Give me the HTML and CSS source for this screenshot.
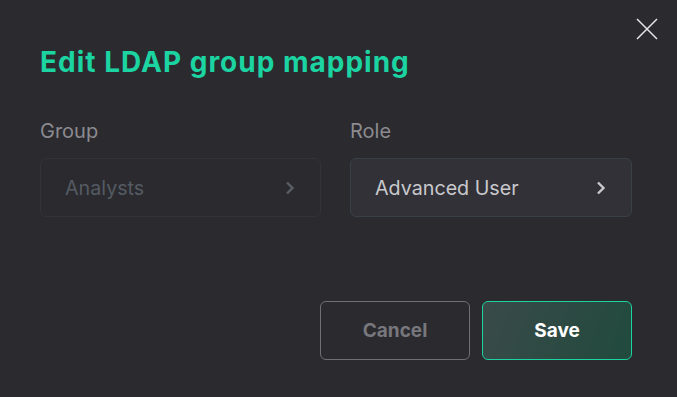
FILE: index.html
```html
<!DOCTYPE html>
<html lang="en">

<head>
    <meta charset="utf-8">
    <meta name="viewport" content="width=device-width, initial-scale=1.0">
    <title>Edit LDAP group mapping</title>
    <link rel="stylesheet" href="styles.css">
</head>

<body>
    <div class="dialog">
        <button class="close" aria-label="Close">
            <svg width="22" height="22" viewBox="0 0 22 22">
                <path d="M1 1 L21 21 M21 1 L1 21" stroke="#e6e6e8" stroke-width="1.5" fill="none" />
            </svg>
        </button>

        <h1>Edit LDAP group mapping</h1>

        <div class="fields">
            <div class="field">
                <label>Group</label>
                <div class="select disabled">
                    <span>Analysts</span>
                    <svg class="chev" width="10" height="14" viewBox="0 0 10 14">
                        <path d="M2 1.5 L7.5 7 L2 12.5" fill="none" stroke-width="2.4" />
                    </svg>
                </div>
            </div>
            <div class="field">
                <label>Role</label>
                <div class="select">
                    <span>Advanced User</span>
                    <svg class="chev" width="10" height="14" viewBox="0 0 10 14">
                        <path d="M2 1.5 L7.5 7 L2 12.5" fill="none" stroke-width="2.4" />
                    </svg>
                </div>
            </div>
        </div>

        <div class="actions">
            <button class="btn cancel">Cancel</button>
            <button class="btn save">Save</button>
        </div>
    </div>
</body></html>
```

FILE: styles.css
```css
* {
    box-sizing: border-box;
    margin: 0;
    padding: 0;
}

html,
body {
    height: 100%;
}

body {
    background-color: #2a2a2f;
    font-family: 'Inter', 'Noto Sans', sans-serif;
}

.dialog {
    position: relative;
    padding: 45px 45px 0 40px;
}

.close {
    position: absolute;
    top: 18px;
    right: 19px;
    background: none;
    border: none;
    width: 22px;
    height: 22px;
    display: flex;
    cursor: pointer;
}

h1 {
    font-size: 28px;
    line-height: 34px;
    font-weight: 700;
    color: #1cd3a2;
    letter-spacing: 1px;
}

.fields {
    display: grid;
    grid-template-columns: 281px 282px;
    column-gap: 29px;
    margin-top: 40px;
}

label {
    display: block;
    font-size: 20px;
    line-height: 24px;
    color: #8b8b90;
    margin-bottom: 15px;
}

.select {
    height: 59px;
    border: 1px solid #3a4047;
    border-radius: 6px;
    background-color: #313137;
    display: flex;
    align-items: center;
    justify-content: space-between;
    padding: 0 25px 0 24px;
    font-size: 19.7px;
    color: #c9c9cd;
}

.select .chev path {
    stroke: #c9c9cd;
}

.select.disabled {
    background-color: #2a2a2f;
    border-color: #323238;
    color: #555b63;
}

.select.disabled .chev path {
    stroke: #5a5f66;
}

.actions {
    display: flex;
    justify-content: flex-end;
    gap: 12px;
    margin-top: 84px;
}

.btn {
    width: 150px;
    height: 59px;
    border-radius: 6px;
    font-family: 'Inter', sans-serif;
    font-size: 19px;
    font-weight: 700;
    cursor: pointer;
}

.cancel {
    background: none;
    border: 1px solid #6f6f75;
    color: #77777d;
}

.save {
    border: 1px solid #1cd3a2;
    color: #ffffff;
    background: linear-gradient(110deg, #3a4a49 0%, #2d4a43 50%, #214a3d 100%);
}
```
